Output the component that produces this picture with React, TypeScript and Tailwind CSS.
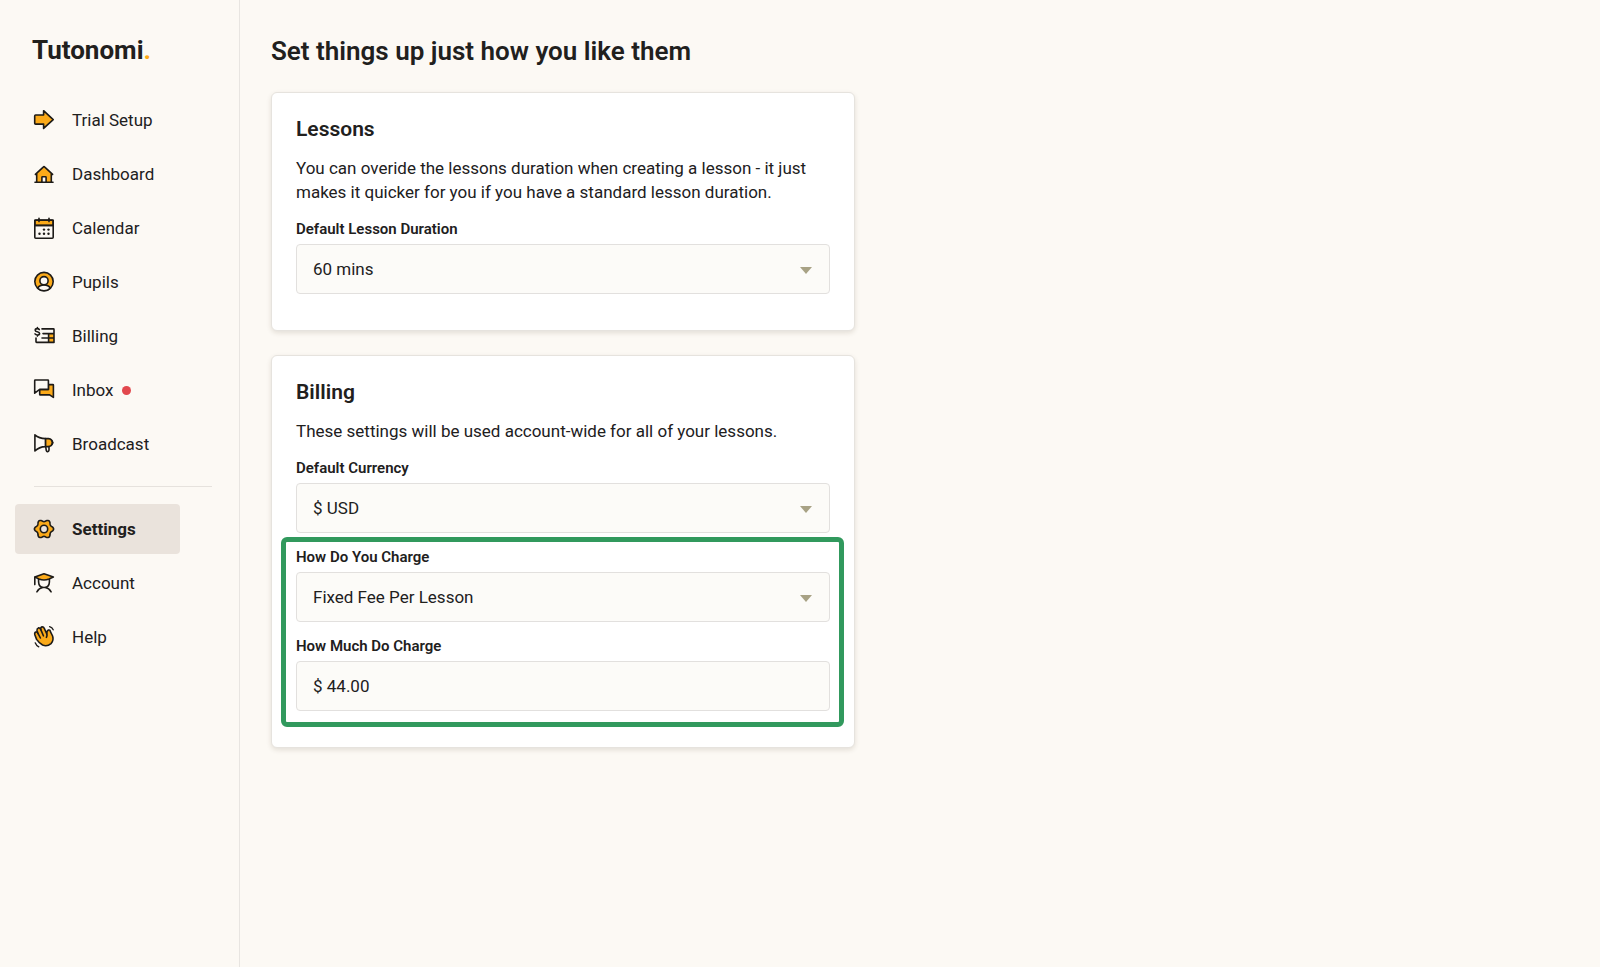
import { useState } from 'react';
import type { ReactNode } from 'react';
import clsx from 'clsx';

const AMBER = '#fbaa19';

function Icon({ children }: { children: ReactNode }) {
  return (
    <svg
      viewBox="0 0 20 20"
      className="size-5 shrink-0 overflow-visible"
      fill="none"
      stroke="#1d1b18"
      strokeWidth="1.6"
      strokeLinecap="round"
      strokeLinejoin="round"
      aria-hidden="true"
    >
      {children}
    </svg>
  );
}

const TrialIcon = () => (
  <Icon>
    <path d="M1.6 5H9.6V.7L19.2 9.6 9.6 18.4V14.1H1.6Q.7 14.1.7 13.2V5.9Q.7 5 1.6 5Z" fill={AMBER} />
  </Icon>
);

const DashboardIcon = () => (
  <Icon>
    <path d="M2.7 9.3V18H17.3V9.3L10 2.6Z" fill={AMBER} stroke="none" />
    <path d="M1.4 10.4 9.2 3.1Q10 2.3 10.8 3.1L18.6 10.4M2.7 9.6V18M17.3 9.6V18" />
    <path d="M7.9 18V13.4Q7.9 12.8 8.5 12.8H11.5Q12.1 12.8 12.1 13.4V18" fill="#fcf9f4" />
    <path d="M1 18.2H19" />
  </Icon>
);

const CalendarIcon = () => (
  <Icon>
    <path d="M.8 2.2H19.2V7.4H.8Z" fill={AMBER} />
    <rect x=".8" y="2" width="18.4" height="18.2" rx="1" />
    <path d="M5 .3V3.6M15 .3V3.6M.8 7.5H19.2" />
    <g fill="#1d1b18" stroke="none">
      <circle cx="10" cy="11.6" r="1.2" />
      <circle cx="14.5" cy="11.6" r="1.2" />
      <circle cx="5.5" cy="15.7" r="1.2" />
      <circle cx="10" cy="15.7" r="1.2" />
      <circle cx="14.5" cy="15.7" r="1.2" />
    </g>
  </Icon>
);

const PupilsIcon = () => (
  <Icon>
    <circle cx="10" cy="9.6" r="9.2" fill={AMBER} />
    <path d="M3.8 16.2Q5.5 12.9 10 12.9T16.2 16.2Q13.6 18.8 10 18.8T3.8 16.2Z" fill="#fcf9f4" />
    <circle cx="10" cy="8.7" r="4.1" fill="#fcf9f4" />
  </Icon>
);

const BillingIcon = () => (
  <Icon>
    <path d="M14.6 7.6H20V16.4H14.6Z" fill={AMBER} stroke="none" />
    <path d="M8 2.9H19.4Q20 2.9 20 3.5V16.4H2.6Q2 16.4 2 15.8V12M9 7.6H20M8 12H20M14.6 7.6V16.4" />
    <path d="M5.3 3.6Q4.8 2.6 3.4 2.6 1.2 2.6 1.2 4.2 1.2 5.3 3.3 5.7 5.6 6.1 5.6 7.5 5.6 9 3.4 9 1.7 9 1 7.9M3.4 1.5V2.6M3.4 9V10.1" />
  </Icon>
);

const InboxIcon = () => (
  <Icon>
    <path d="M14.4 4.6H18.9Q19.4 4.6 19.4 5.1V17.4L15.6 14.9H6.2Q5.7 14.9 5.7 14.4V9.4H14.4Z" fill={AMBER} />
    <path d="M1.2 0H13.9Q14.4 0 14.4.5V9.4H5.7L.7 13.2V.5Q.7 0 1.2 0Z" fill="#fcf9f4" />
  </Icon>
);

const BroadcastIcon = () => (
  <Icon>
    <path d="M.9.8Q5 4.4 11.6 4.6V12.6Q5 12.8.9 17Z" />
    <path d="M11.6 4.6H14.5Q18.3 4.9 18.3 8.6T14.5 12.6H11.6Z" fill={AMBER} />
    <path d="M18.3 7.2Q19.6 8.6 18.3 10M11.7 12.6 12.3 16.6Q12.6 17.8 13.7 17.6T15 16.2V12.6" />
  </Icon>
);

// Six soft lobes, sampled around the circle
const GEAR_POINTS = Array.from({ length: 72 }, (_, i) => {
  const angle = (i * Math.PI) / 36;
  const radius = 8.5 + 1.1 * Math.cos(6 * angle);
  return `${(10 + radius * Math.cos(angle)).toFixed(2)},${(10 + radius * Math.sin(angle)).toFixed(2)}`;
}).join(' ');

const SettingsIcon = () => (
  <Icon>
    <polygon points={GEAR_POINTS} fill={AMBER} />
    <circle cx="10" cy="10" r="3.7" fill="#eae3dc" />
  </Icon>
);

const AccountIcon = () => (
  <Icon>
    <path d="M4.6 6V9Q4.8 14.5 10 14.5T15.4 9V6" />
    <path d="M10 .8 19.4 4.1 15 6Q10 8 5 6L.8 4.1Z" fill={AMBER} />
    <path d="M.8 4.3V11.6M2.9 18.8Q5 15 8.6 14.5M17.1 18.8Q15 15 11.4 14.5" />
  </Icon>
);

const HelpIcon = () => (
  <Icon>
    <path
      d="M2.6 12.4.9 8Q.2 5.6 1.8 5 3.2 4.6 4 6.4L3 3.4Q2.8 1.4 4.4.9 5.9.6 6.8 2.6 6.4.2 8-.1 9.6-.3 10.4 1.6L12.8 7Q12.6 3.8 14.4 3 16 2.6 16.4 4.6L18.6 9Q20 13.4 17 16.6 13 20 8.6 18 5 16 2.6 12.4Z"
      fill={AMBER}
    />
    <path d="M4 6.4 6.4 11M6.8 2.6 9.4 8.8M12.8 7Q13.4 8.4 12.4 10.4" />
    <path d="M15.6-.4Q18.2.4 19.2 2.8M1.2 15.8Q2.2 18.6 4.8 19.8" strokeWidth="1.3" />
  </Icon>
);

interface NavItem {
  label: string;
  icon: () => ReactNode;
  unread?: boolean;
}

const MAIN_NAV: NavItem[] = [
  { label: 'Trial Setup', icon: TrialIcon },
  { label: 'Dashboard', icon: DashboardIcon },
  { label: 'Calendar', icon: CalendarIcon },
  { label: 'Pupils', icon: PupilsIcon },
  { label: 'Billing', icon: BillingIcon },
  { label: 'Inbox', icon: InboxIcon, unread: true },
  { label: 'Broadcast', icon: BroadcastIcon },
];

const ACCOUNT_NAV: NavItem[] = [
  { label: 'Settings', icon: SettingsIcon },
  { label: 'Account', icon: AccountIcon },
  { label: 'Help', icon: HelpIcon },
];

function NavList({ items, active }: { items: NavItem[]; active: string }) {
  return (
    <ul className="flex flex-col gap-1">
      {items.map(({ label, icon: ItemIcon, unread }) => (
        <li key={label}>
          <a
            href="#"
            aria-current={label === active ? 'page' : undefined}
            className={clsx(
              'flex h-[50px] w-[165px] items-center rounded pl-[19px]',
              label === active ? 'bg-[#eae3dc] font-bold' : 'hover:bg-[#f3eee8]',
            )}
          >
            <ItemIcon />
            <span className="ml-[18px]">{label}</span>
            {unread && <span className="ml-2 size-[9px] rounded-full bg-[#e2484d]" />}
          </a>
        </li>
      ))}
    </ul>
  );
}

function Sidebar() {
  return (
    <aside className="w-60 shrink-0 border-r border-[#e8e5e1] pl-[15px]">
      <a href="#" className="mt-[34px] ml-[17px] block text-[26px] leading-8 font-bold">
        Tutonomi<span className="text-[#fbaa19]">.</span>
      </a>
      <nav className="mt-[29px]">
        <NavList items={MAIN_NAV} active="Settings" />
        <hr className="mt-[17px] mr-[27px] mb-[17px] ml-[19px] border-[#e6e2dd]" />
        <NavList items={ACCOUNT_NAV} active="Settings" />
      </nav>
    </aside>
  );
}

function Card({ title, intro, children }: { title: string; intro: string; children: ReactNode }) {
  return (
    <section className="rounded-md border border-[#e6e3de] bg-white px-6 pt-6 pb-[22px] shadow-[0_2px_5px_rgba(60,50,20,0.13)]">
      <h2 className="text-[21px] leading-6 font-semibold">{title}</h2>
      <p className="my-[15px] leading-6">{intro}</p>
      {children}
    </section>
  );
}

const CONTROL = 'block h-[50px] w-full appearance-none rounded border border-[#e2e0de] bg-[#fcfbf8] px-4 outline-none focus:border-[#a8a285]';

function Field({ id, label, children }: { id: string; label: string; children: ReactNode }) {
  return (
    <div className="mb-[14px]">
      <label htmlFor={id} className="mb-[5px] block text-[15px] leading-5 font-semibold">
        {label}
      </label>
      {children}
    </div>
  );
}

function SelectField({ id, label, options }: { id: string; label: string; options: string[] }) {
  const [value, setValue] = useState(options[0]);
  return (
    <Field id={id} label={label}>
      <div className="relative">
        <select id={id} value={value} onChange={e => setValue(e.target.value)} className={CONTROL}>
          {options.map(option => (
            <option key={option}>{option}</option>
          ))}
        </select>
        <svg viewBox="0 0 12 7" className="pointer-events-none absolute top-[23px] right-[18px] h-[7px] w-3" aria-hidden="true">
          <path d="M0 0H12L6 7Z" fill="#a8a285" />
        </svg>
      </div>
    </Field>
  );
}

export default function App() {
  const [fee, setFee] = useState('$ 44.00');

  return (
    <div className="flex min-h-screen bg-[#fcf9f4] font-['Roboto',sans-serif] text-[17px] leading-6 text-[#21201d]">
      <Sidebar />
      <main className="min-w-0 flex-1 px-[31px] pt-[35px] pb-8">
        <h1 className="text-[26px] leading-8 font-semibold">Set things up just how you like them</h1>
        <div className="mt-[25px] flex max-w-[584px] flex-col gap-6">
          <Card
            title="Lessons"
            intro="You can overide the lessons duration when creating a lesson - it just makes it quicker for you if you have a standard lesson duration."
          >
            <SelectField id="duration" label="Default Lesson Duration" options={['60 mins', '30 mins', '45 mins', '90 mins']} />
          </Card>

          <Card title="Billing" intro="These settings will be used account-wide for all of your lessons.">
            <SelectField id="currency" label="Default Currency" options={['$ USD', '£ GBP', '€ EUR']} />
            <div className="relative flow-root">
              <SelectField id="charge-type" label="How Do You Charge" options={['Fixed Fee Per Lesson', 'Hourly Rate']} />
              <Field id="charge-amount" label="How Much Do Charge">
                <input id="charge-amount" type="text" value={fee} onChange={e => setFee(e.target.value)} className={CONTROL} />
              </Field>
              {/* Highlight ring around the charge settings */}
              <div className="pointer-events-none absolute -top-[10px] -right-[14px] -bottom-[2px] -left-[15px] rounded-md border-[5px] border-[#31995d]" />
            </div>
          </Card>
        </div>
      </main>
    </div>
  );
}
